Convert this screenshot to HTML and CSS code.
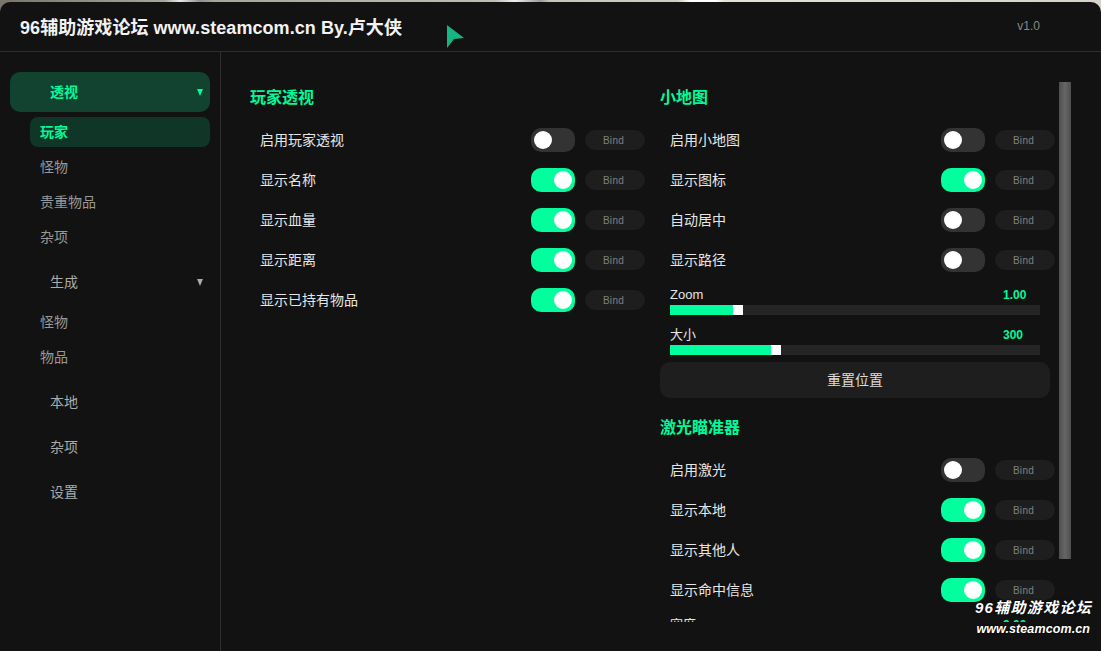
FILE: index.html
```html
<!DOCTYPE html>
<html lang="zh">
<head>
    <meta charset="UTF-8">
    <title>96辅助游戏论坛</title>
    <link rel="stylesheet" href="styles.css">
</head>
<body>
    <div class="window">
        <header class="header">
            <h1>96辅助游戏论坛 www.steamcom.cn By.卢大侠</h1>
            <span class="version">v1.0</span>
        </header>

        <div class="main">
            <!-- SIDEBAR -->
            <nav class="sidebar">
                <div class="nav-main active">透视<span class="arrow"></span></div>
                <div class="nav-group">
                    <div class="nav-sub active">玩家</div>
                    <div class="nav-sub">怪物</div>
                    <div class="nav-sub">贵重物品</div>
                    <div class="nav-sub">杂项</div>
                </div>
                <div class="nav-main">生成<span class="arrow"></span></div>
                <div class="nav-group">
                    <div class="nav-sub">怪物</div>
                    <div class="nav-sub">物品</div>
                </div>
                <div class="nav-main">本地</div>
                <div class="nav-main">杂项</div>
                <div class="nav-main">设置</div>
            </nav>

            <!-- CONTENT -->
            <div class="content">
                <section class="column">
                    <h2>玩家透视</h2>
                    <div class="row"><label>启用玩家透视</label><span class="toggle"></span><span class="bind">Bind</span></div>
                    <div class="row"><label>显示名称</label><span class="toggle on"></span><span class="bind">Bind</span></div>
                    <div class="row"><label>显示血量</label><span class="toggle on"></span><span class="bind">Bind</span></div>
                    <div class="row"><label>显示距离</label><span class="toggle on"></span><span class="bind">Bind</span></div>
                    <div class="row"><label>显示已持有物品</label><span class="toggle on"></span><span class="bind">Bind</span></div>
                </section>

                <section class="column">
                    <h2>小地图</h2>
                    <div class="row"><label>启用小地图</label><span class="toggle"></span><span class="bind">Bind</span></div>
                    <div class="row"><label>显示图标</label><span class="toggle on"></span><span class="bind">Bind</span></div>
                    <div class="row"><label>自动居中</label><span class="toggle"></span><span class="bind">Bind</span></div>
                    <div class="row"><label>显示路径</label><span class="toggle"></span><span class="bind">Bind</span></div>

                    <div class="slider">
                        <div class="slider-top"><span>Zoom</span><b>1.00</b></div>
                        <div class="track"><div class="fill" style="width: 63px"></div><div class="thumb"></div></div>
                    </div>
                    <div class="slider">
                        <div class="slider-top"><span>大小</span><b>300</b></div>
                        <div class="track"><div class="fill" style="width: 101px"></div><div class="thumb"></div></div>
                    </div>
                    <button class="btn">重置位置</button>

                    <h2 class="second">激光瞄准器</h2>
                    <div class="row"><label>启用激光</label><span class="toggle"></span><span class="bind">Bind</span></div>
                    <div class="row"><label>显示本地</label><span class="toggle on"></span><span class="bind">Bind</span></div>
                    <div class="row"><label>显示其他人</label><span class="toggle on"></span><span class="bind">Bind</span></div>
                    <div class="row"><label>显示命中信息</label><span class="toggle on"></span><span class="bind">Bind</span></div>
                    <div class="slider">
                        <div class="slider-top"><span>宽度</span><b>2.00</b></div>
                        <div class="track"><div class="fill" style="width: 63px"></div><div class="thumb"></div></div>
                    </div>
                </section>

                <div class="scrollbar"></div>
            </div>
        </div>

        <!-- mouse pointer and forum watermark sit over the page -->
        <svg class="pointer" width="18" height="24" viewBox="0 0 18 24"><polygon points="0,0 17,13 7,14 0,23" fill="#17b584"/></svg>
        <div class="watermark">
            <div class="wm-name">96辅助游戏论坛</div>
            <div class="wm-url">www.steamcom.cn</div>
        </div>
    </div>
</body>
</html>
```

FILE: styles.css
```css
* { margin: 0; padding: 0; box-sizing: border-box; }
html, body { height: 100%; overflow: hidden; }
body {
    font-family: "Liberation Sans", "Noto Sans CJK SC", sans-serif;
    background: linear-gradient(90deg, #77756c 0, #a8a69c 165px, #e8e8ea 180px, #8f8f96 200px, #a8a69c 215px, #c0beb2 495px, #eeeef0 515px, #9a9aa0 540px, #c8c6ba 550px, #cfcdc1 678px, #fff 690px, #fff 715px, #e4e2d6 725px, #d6d4c8 100%);
    color: #e6e6e6;
    font-size: 14px;
}
.window {
    position: relative;
    height: 649px;
    margin-top: 2px;
    background: #121212;
    border-radius: 10px 10px 0 0;
    overflow: hidden;
}
.header {
    height: 50px;
    padding: 0 61px 2px 20px;
    display: flex;
    align-items: center;
    justify-content: space-between;
    border-bottom: 1px solid #2e2e2e;
}
.header h1 { font-size: 18px; font-weight: bold; color: #f2f2f2; letter-spacing: 0.06px; }
.version { font-size: 12px; color: #888; }
.main { display: flex; height: 599px; }

.sidebar {
    width: 221px;
    flex-shrink: 0;
    padding: 20px 10px 0;
    border-right: 1px solid #2e2e2e;
}
.nav-main {
    position: relative;
    height: 40px;
    line-height: 40px;
    margin-bottom: 5px;
    padding-left: 40px;
    border-radius: 10px;
    color: #aaa;
}
.nav-main.active { background: #124230; color: #00fa9a; font-weight: bold; }
.arrow {
    position: absolute;
    right: 7px;
    top: 17px;
    border-left: 3px solid transparent;
    border-right: 3px solid transparent;
    border-top: 7px solid #aaa;
}
.active .arrow { border-top-color: #00fa9a; }
.nav-group { margin-bottom: 10px; padding-left: 20px; }
.nav-sub {
    height: 30px;
    line-height: 30px;
    margin-bottom: 5px;
    padding-left: 10px;
    border-radius: 8px;
    color: #999;
}
.nav-sub.active { background: #103628; color: #00fa9a; font-weight: bold; }

.content {
    position: relative;
    flex: 1;
    height: 570px;
    padding: 31px 0 0 29px;
    display: grid;
    grid-template-columns: 395px 395px;
    column-gap: 15px;
    align-content: start;
    overflow: hidden;
}
h2 {
    height: 30px;
    line-height: 30px;
    margin-bottom: 7px;
    font-size: 16px;
    color: #00fa9a;
}
h2.second { margin-top: 15px; }
.row {
    height: 40px;
    padding-left: 10px;
    display: flex;
    align-items: center;
}
.row label { flex: 1; color: #e6e6e6; padding-bottom: 2px; }
.toggle {
    position: relative;
    width: 44px;
    height: 24px;
    border-radius: 10px;
    background: #333;
}
.toggle::after {
    content: "";
    position: absolute;
    left: 3px;
    top: 3px;
    width: 18px;
    height: 18px;
    border-radius: 50%;
    background: #fff;
}
.toggle.on { background: #00ff9d; }
.toggle.on::after { left: 23px; }
.bind {
    width: 60px;
    height: 20px;
    line-height: 21px;
    margin-left: 10px;
    padding-right: 3px;
    border-radius: 10px;
    background: #1e1e1e;
    color: #808080;
    font-size: 10px;
    letter-spacing: 0.3px;
    text-align: center;
}
.slider { height: 40px; padding: 7px 10px 0; width: 390px; }
.slider-top { display: flex; justify-content: space-between; height: 18px; line-height: 16px; font-size: 13px; }
.slider-top b { width: 37px; font-size: 12px; color: #00fa9a; }
.track { display: flex; height: 10px; background: #252525; }
.fill { background: #00ff9d; }
.thumb { width: 10px; background: #fff; }
.btn {
    display: block;
    width: 390px;
    height: 36px;
    margin-top: 2px;
    padding-bottom: 2px;
    border: none;
    border-radius: 10px;
    background: #1e1e1e;
    color: #dcdcdc;
    font-family: inherit;
    font-size: 14px;
}
.scrollbar {
    position: absolute;
    left: 838px;
    top: 30px;
    width: 12px;
    height: 477px;
    background: linear-gradient(90deg, #4e4e4e 0%, #666 50%, #4e4e4e 100%);
}
.pointer { position: absolute; left: 447px; top: 23px; }
.watermark {
    position: absolute;
    right: 9px;
    top: 596px;
    text-align: right;
    font-weight: bold;
    font-style: italic;
    color: #fff;
    text-shadow: 0 0 2px #000;
}
.wm-name { font-size: 15px; height: 22px; line-height: 20px; letter-spacing: 1.3px; }
.wm-url { font-size: 12.5px; line-height: 18px; margin-right: 2px; letter-spacing: 0.1px; }
```
